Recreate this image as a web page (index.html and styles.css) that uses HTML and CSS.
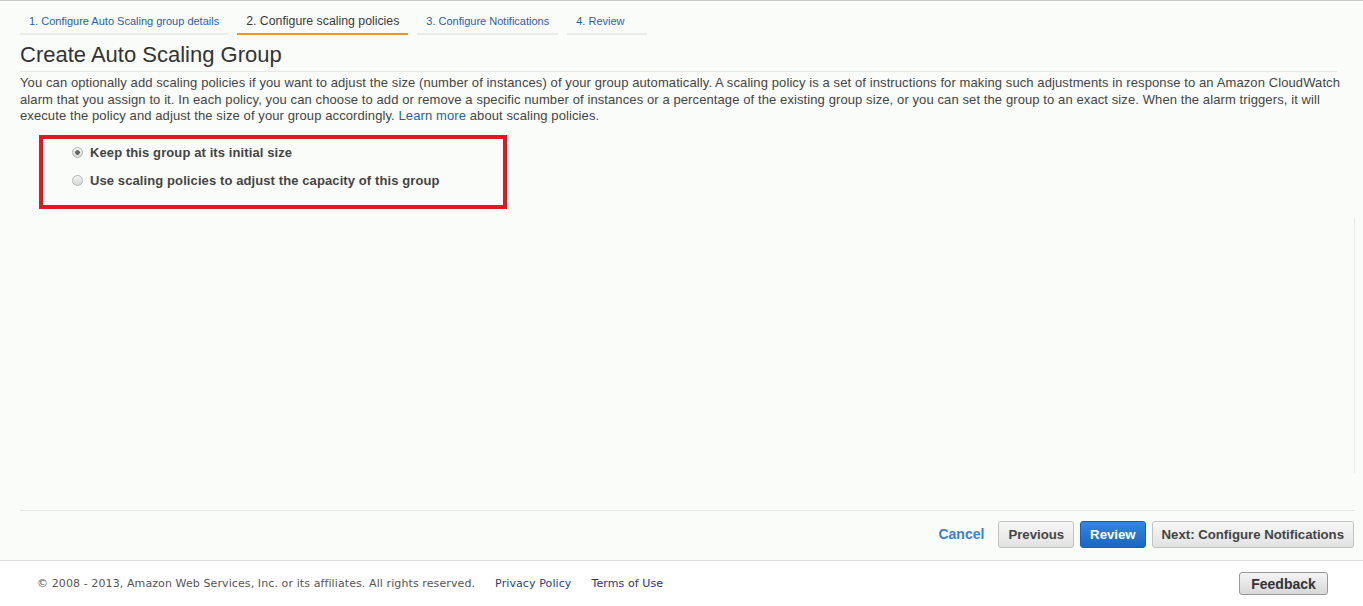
FILE: index.html
```html
<!DOCTYPE html>
<html lang="en">
<head>
    <meta charset="UTF-8">
    <title>Create Auto Scaling Group</title>
    <link rel="stylesheet" href="styles.css">
</head>
<body>

<div class="wizard">
    <div class="tabs">
        <a class="tab" href="#">1. Configure Auto Scaling group details</a>
        <a class="tab active" href="#">2. Configure scaling policies</a>
        <a class="tab" href="#">3. Configure Notifications</a>
        <a class="tab last" href="#">4. Review</a>
    </div>

    <h1>Create Auto Scaling Group</h1>

    <p class="intro">
        You can optionally add scaling policies if you want to adjust the size (number of instances) of your group automatically. A scaling policy is a set of instructions for making such adjustments in response to an Amazon CloudWatch<br>
        alarm that you assign to it. In each policy, you can choose to add or remove a specific number of instances or a percentage of the existing group size, or you can set the group to an exact size. When the alarm triggers, it will<br>
        execute the policy and adjust the size of your group accordingly. <a href="#">Learn more</a> about scaling policies.
    </p>

    <div class="options">
        <label class="option">
            <input type="radio" name="policy" checked>
            Keep this group at its initial size
        </label>
        <label class="option">
            <input type="radio" name="policy">
            Use scaling policies to adjust the capacity of this group
        </label>
    </div>

    <div class="track"></div>

    <div class="actions">
        <a class="cancel" href="#">Cancel</a>
        <button class="btn">Previous</button>
        <button class="btn primary">Review</button>
        <button class="btn">Next: Configure Notifications</button>
    </div>
</div>

<div class="footer">
    <div class="left">
        <span>&copy; 2008 - 2013, Amazon Web Services, Inc. or its affiliates. All rights reserved.</span>
        <a href="#">Privacy Policy</a>
        <a class="visited" href="#">Terms of Use</a>
    </div>
    <button class="feedback">Feedback</button>
</div>

</body>
</html>
```

FILE: styles.css
```css
body {
    font-family: "Liberation Sans", Arial, sans-serif;
    background: #fafcfa;
    margin: 0;
    border-top: 1px solid #c8c8c8;
    color: #444;
}

a {
    color: #1e5fb0;
    text-decoration: none;
}

.wizard {
    padding: 0 8px 0 20px;
}

.tabs {
    display: flex;
    gap: 9px;
    padding-top: 14px;
}

.tab {
    font-size: 11px;
    line-height: 13px;
    padding: 0 9px 5px;
    border-bottom: 2px solid #ebebeb;
    color: #2660ad;
}

.tab.active {
    font-size: 12.3px;
    color: #3a3a3a;
    border-bottom-color: #e8952b;
}

.tab.last {
    padding-right: 22px;
}

h1 {
    font-size: 22px;
    font-weight: normal;
    color: #333;
    margin: 7px 18px 0 0;
    padding-bottom: 3px;
    border-bottom: 1px solid #e6e8e6;
    line-height: 26px;
}

.intro {
    font-size: 13px;
    letter-spacing: 0.1px;
    line-height: 16.5px;
    margin: 3px 0 0;
    white-space: nowrap;
    color: #444;
}

.options {
    width: 460px;
    margin: 10px 0 0 19px;
    padding: 0 0 10px;
    border: 4px solid #e4161f;
}

.option {
    display: flex;
    align-items: center;
    font-size: 13px;
    letter-spacing: 0.1px;
    font-weight: bold;
    color: #444;
    height: 28px;
    padding-left: 29px;
}

.option input {
    appearance: none;
    margin: 0 7px 0 0;
    width: 11px;
    height: 11px;
    border: 1px solid #b4b4b4;
    border-radius: 50%;
    background: linear-gradient(#f4f4f4, #d8d8d8);
}

.option input:checked {
    background: radial-gradient(circle, #666 0 2px, transparent 2.6px), linear-gradient(#f4f4f4, #d8d8d8);
}

.track {
    height: 255px;
    margin-top: 9px;
    border-right: 1px solid #e8eae8;
}

.actions {
    display: flex;
    justify-content: flex-end;
    align-items: center;
    gap: 6px;
    margin-top: 37px;
    padding: 10px 1px 12px 0;
    border-top: 1px solid #e6e8e6;
}

.cancel {
    font-size: 14px;
    font-weight: bold;
    color: #3c7fd0;
    margin-right: 8px;
}

.btn {
    font-family: "Liberation Sans", Arial, sans-serif;
    font-size: 13.2px;
    font-weight: bold;
    color: #444;
    height: 27px;
    padding: 0 9px;
    border: 1px solid #c2c2c2;
    border-radius: 3px;
    background: linear-gradient(#f7f7f7, #e2e2e2);
}

.btn.primary {
    color: white;
    border-color: #1a5fb4;
    background: linear-gradient(#3486e0, #1a66c2);
}

.footer {
    display: flex;
    justify-content: space-between;
    align-items: center;
    background: white;
    border-top: 1px solid #dcdcdc;
    height: 45px;
    padding: 0 35px 0 37px;
}

.footer .left {
    display: flex;
    gap: 20px;
    font-family: "DejaVu Sans", Verdana, sans-serif;
    font-size: 11px;
    letter-spacing: 0.1px;
    color: #555;
}

.footer a {
    color: #1e3f9a;
}

.footer a.visited {
    color: #2c2c8c;
}

.feedback {
    font-family: "Liberation Sans", Arial, sans-serif;
    font-size: 14px;
    font-weight: bold;
    color: #333;
    height: 23px;
    width: 89px;
    border: 1px solid #999;
    border-radius: 3px;
    background: linear-gradient(#f4f4f4, #d8d8d8);
    margin-top: 1px;
}
```
